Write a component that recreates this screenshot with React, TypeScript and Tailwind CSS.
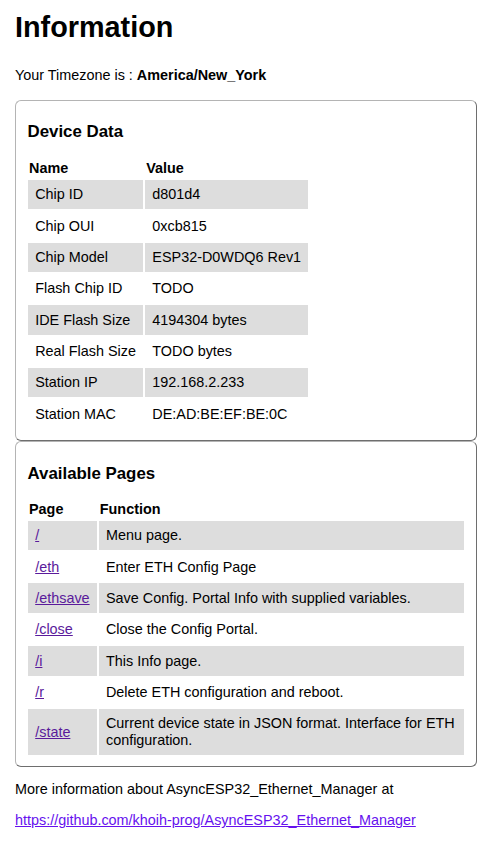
const deviceRows = [
  ["Chip ID", "d801d4"],
  ["Chip OUI", "0xcb815"],
  ["Chip Model", "ESP32-D0WDQ6 Rev1"],
  ["Flash Chip ID", "TODO"],
  ["IDE Flash Size", "4194304 bytes"],
  ["Real Flash Size", "TODO bytes"],
  ["Station IP", "192.168.2.233"],
  ["Station MAC", "DE:AD:BE:EF:BE:0C"],
]

const pageRows = [
  ["/", "Menu page."],
  ["/eth", "Enter ETH Config Page"],
  ["/ethsave", "Save Config. Portal Info with supplied variables."],
  ["/close", "Close the Config Portal."],
  ["/i", "This Info page."],
  ["/r", "Delete ETH configuration and reboot."],
  ["/state", "Current device state in JSON format. Interface for ETH configuration."],
]

const fieldsetStyle =
  "rounded-[6px] border border-t-[#b4b4b4] border-l-[#b4b4b4] border-r-[#6e6e6e] border-b-[#6e6e6e] px-[10px] pb-[9px]"
const headingStyle = "text-[16.85px] leading-[19.4px] font-bold pl-[1.5px]"
const thStyle = "text-left font-bold px-[1px] py-[1px] leading-[16.5px]"
const tdStyle = "px-[7.2px] py-[6.45px] leading-[16.5px] align-middle"

const App = () => {
  return (
    <div
      className="min-h-[847px] bg-white pl-[15px] pr-[20px] pt-[11px] text-[14.4px] leading-[16.5px] text-black"
      style={{ fontFamily: '"Liberation Sans", Arial, sans-serif' }}
    >
      <h1 className="text-[28.8px] leading-[33px] font-bold">Information</h1>
      <p className="mt-[23px]">
        Your Timezone is : <b>America/New_York</b>
      </p>

      <fieldset className={`mt-[16px] pt-[21px] ${fieldsetStyle}`}>
        <h3 className={`${headingStyle} mb-[16.4px]`}>Device Data</h3>
        <table className="border-separate border-spacing-[2px]">
          <thead>
            <tr>
              <th className={thStyle}>Name</th>
              <th className={thStyle}>Value</th>
            </tr>
          </thead>
          <tbody>
            {deviceRows.map(([name, value], i) => (
              <tr key={name} className={i % 2 === 0 ? "bg-[#dddddd]" : ""}>
                <td className={`${tdStyle} whitespace-nowrap`}>{name}</td>
                <td className={`${tdStyle} whitespace-nowrap`}>{value}</td>
              </tr>
            ))}
          </tbody>
        </table>
      </fieldset>

      <fieldset className={`pt-[22px] ${fieldsetStyle}`}>
        <h3 className={`${headingStyle} mb-[15px]`}>Available Pages</h3>
        <table className="w-full border-separate border-spacing-[2px]">
          <thead>
            <tr>
              <th className={`${thStyle} w-[1%]`}>Page</th>
              <th className={thStyle}>Function</th>
            </tr>
          </thead>
          <tbody>
            {pageRows.map(([page, desc], i) => (
              <tr key={page} className={i % 2 === 0 ? "bg-[#dddddd]" : ""}>
                <td className={`${tdStyle} whitespace-nowrap`}>
                  <a href={page} className="text-[#5a1a9b] underline">
                    {page}
                  </a>
                </td>
                <td className={tdStyle}>{desc}</td>
              </tr>
            ))}
          </tbody>
        </table>
      </fieldset>

      <p className="mt-[14px]">More information about AsyncESP32_Ethernet_Manager at</p>
      <p className="mt-[15px]">
        <a
          href="https://github.com/khoih-prog/AsyncESP32_Ethernet_Manager"
          className="text-[#6611ee] underline"
        >
          https://github.com/khoih-prog/AsyncESP32_Ethernet_Manager
        </a>
      </p>
    </div>
  )
}

export default App
